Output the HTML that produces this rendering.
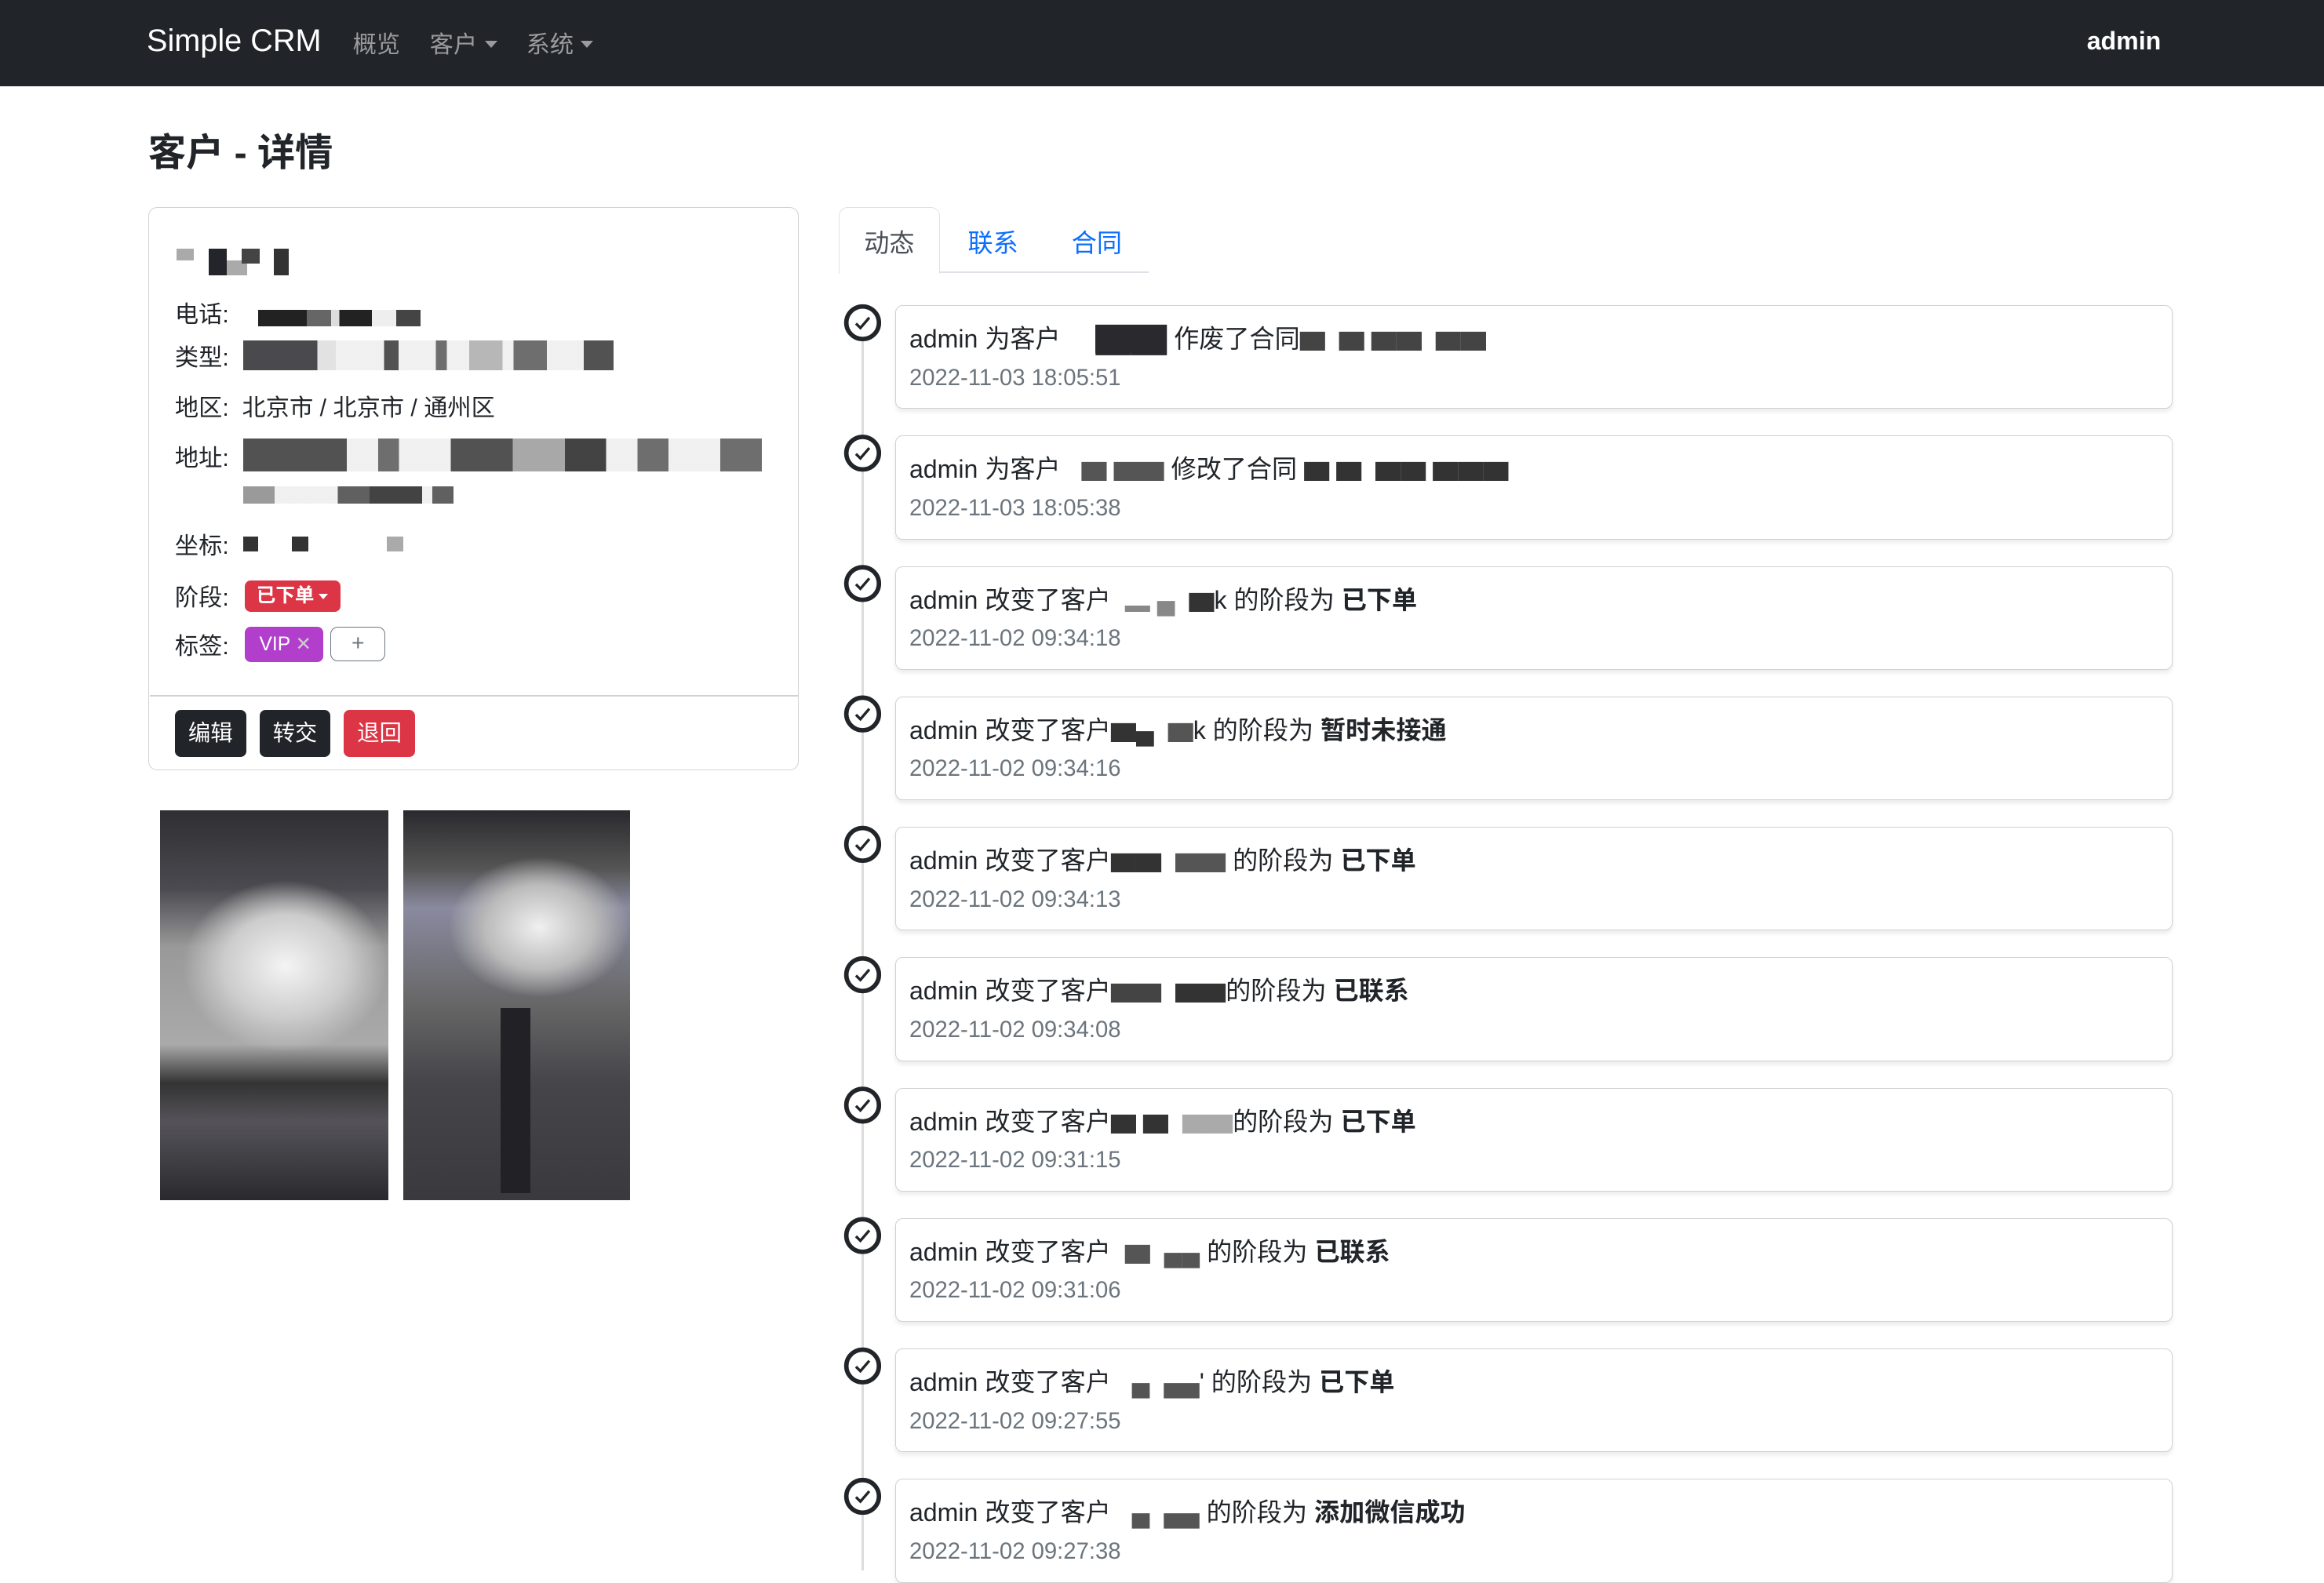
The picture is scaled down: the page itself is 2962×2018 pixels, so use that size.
<!DOCTYPE html>
<html><head><meta charset="utf-8"><style>
html,body{margin:0;padding:0;background:#fff;}
body{width:1568px;height:1059px;zoom:1.8890;overflow:hidden;position:relative;font-family:"Liberation Sans","Noto Sans CJK SC",sans-serif;color:#212529;}
.a{position:absolute;}
.nav{left:0;top:0;width:1568px;height:58px;background:#212529;}
.brand{left:99px;top:16px;font-size:21px;color:#fff;}
.nl{top:17px;font-size:16px;color:#9a9b9d;}
.caret{display:inline-block;border-left:4.5px solid transparent;border-right:4.5px solid transparent;border-top:5px solid #9a9b9d;vertical-align:3px;margin-left:5px;}
.card{left:100px;top:140px;width:438px;height:379px;border:1px solid #d0d2d4;border-radius:6px;}
.lbl{left:118px;font-size:16px;}
.px{position:absolute;}
.btn{top:479px;height:32px;line-height:32px;width:48px;text-align:center;color:#fff;font-size:15px;border-radius:4px;}
.item{left:604px;width:861px;height:69px;border:1px solid #cfd1d3;border-radius:5px;box-shadow:0 2px 3px rgba(0,0,0,.08);}
.item .t{position:absolute;left:9px;top:9px;font-size:17px;white-space:nowrap;}
.item .d{position:absolute;left:9px;top:40px;font-size:15.5px;color:#6c757d;}
</style></head><body>
<div class="a nav"></div>
<div class="a brand">Simple CRM</div>
<div class="a nl" style="left:238px">概览</div>
<div class="a nl" style="left:290px">客户<span class="caret"></span></div>
<div class="a nl" style="left:355px">系统<span class="caret"></span></div>
<div class="a" style="left:1408px;top:18px;font-size:17px;color:#fff;font-weight:bold">admin</div>
<div class="a" style="left:100px;top:82px;font-size:25.5px;font-weight:bold">客户 - 详情</div>

<div class="a card"></div>
<div class="px" style="left:119px;top:168px;width:12px;height:8px;background:#aaa"></div>
<div class="px" style="left:141px;top:168px;width:12px;height:18px;background:#24252a"></div>
<div class="px" style="left:153px;top:176px;width:14px;height:10px;background:#aaa"></div>
<div class="px" style="left:163px;top:168px;width:12px;height:10px;background:#444"></div>
<div class="px" style="left:185px;top:168px;width:10px;height:18px;background:#333"></div>
<div class="a lbl" style="top:199px">电话:</div>
<div class="px" style="left:174px;top:209px;width:110px;height:11px;background:linear-gradient(90deg,#222 0 30%,#666 30% 45%,#ddd 45% 50%,#222 50% 70%,#eee 70% 85%,#444 85%)"></div>
<div class="a lbl" style="top:228px">类型:</div>
<div class="px" style="left:164px;top:230px;width:250px;height:20px;background:linear-gradient(90deg,#2a2a2e 0 20%,#ddd 20% 25%,#eee 25% 38%,#333 38% 42%,#eee 42% 52%,#555 52% 55%,#eee 55% 61%,#aaa 61% 70%,#eee 70% 73%,#555 73% 82%,#eee 82% 92%,#333 92%);opacity:.85"></div>
<div class="a lbl" style="top:262px">地区: &nbsp;北京市 / 北京市 / 通州区</div>
<div class="a lbl" style="top:296px">地址:</div>
<div class="px" style="left:164px;top:296px;width:350px;height:22px;background:linear-gradient(90deg,#333 0 20%,#eee 20% 26%,#555 26% 30%,#eee 30% 40%,#333 40% 52%,#999 52% 62%,#222 62% 70%,#eee 70% 76%,#555 76% 82%,#eee 82% 92%,#555 92%);opacity:.85"></div>
<div class="px" style="left:164px;top:328px;width:142px;height:12px;background:linear-gradient(90deg,#888 0 15%,#eee 15% 45%,#444 45% 60%,#222 60% 85%,#eee 85% 90%,#444 90%);opacity:.85"></div>
<div class="a lbl" style="top:355px">坐标:</div>
<div class="px" style="left:164px;top:362px;width:10px;height:10px;background:#333"></div>
<div class="px" style="left:197px;top:362px;width:11px;height:10px;background:#333"></div>
<div class="px" style="left:261px;top:362px;width:11px;height:10px;background:#aaa"></div>
<div class="a lbl" style="top:390px">阶段:</div>
<div class="a" style="left:165px;top:392px;width:65px;height:21px;background:#dc3545;border-radius:4px;color:#fff;font-size:13px;line-height:21px;text-indent:8px;font-weight:bold">已下单<span class="caret" style="border-top-color:#fff;margin-left:3px;vertical-align:2px;border-width:4px 3.5px 0"></span></div>
<div class="a lbl" style="top:423px">标签:</div>
<div class="a" style="left:165px;top:423px;width:53px;height:24px;background:#b13fcb;border-radius:4px;color:#fff;font-size:13px;line-height:24px;text-indent:10px">VIP <span style="color:#ccc">✕</span></div>
<div class="a" style="left:223px;top:423px;width:36px;height:22px;border:1px solid #6c757d;border-radius:5px;color:#6c757d;text-align:center;line-height:22px;font-size:15px">+</div>
<div class="a" style="left:101px;top:469px;width:438px;height:1px;background:#d0d2d4"></div>
<div class="a btn" style="left:118px;background:#212529">编辑</div>
<div class="a btn" style="left:175px;background:#212529">转交</div>
<div class="a btn" style="left:232px;background:#dc3545">退回</div>

<div class="a" style="left:108px;top:547px;width:154px;height:263px;background:radial-gradient(ellipse 45% 22% at 55% 40%,#f4f4f4 0,#ccc 60%,transparent 100%),linear-gradient(#2e2e33 0,#4a4a50 20%,#999 35%,#aaa 60%,#333 70%,#55535a 80%,#2a2a2e 100%)"></div>
<div class="a" style="left:272px;top:547px;width:153px;height:263px;background:radial-gradient(ellipse 40% 18% at 60% 30%,#f0f0f0 0,#bbb 60%,transparent 100%),linear-gradient(#2a2a2e 0,#555 15%,#8a8aa0 25%,#666 50%,#45454a 70%,#3a3a3e 100%)"></div>
<div class="a" style="left:338px;top:680px;width:20px;height:125px;background:#222226"></div>

<div class="a" style="left:566px;top:140px;width:67px;height:44px;border:1px solid #dee2e6;border-bottom:none;border-radius:6px 6px 0 0;background:#fff"></div>
<div class="a" style="left:634px;top:183px;width:141px;height:1px;background:#dee2e6"></div>
<div class="a" style="left:583px;top:151px;font-size:17px;color:#495057">动态</div>
<div class="a" style="left:653px;top:151px;font-size:17px;color:#0d6efd">联系</div>
<div class="a" style="left:723px;top:151px;font-size:17px;color:#0d6efd">合同</div>

<div class="a" style="left:581px;top:220px;width:2px;height:840px;background:#dcdcdc"></div>

<div class="a item" style="top:206px"><div class="t">admin 为客户 &nbsp;&nbsp;&nbsp;&nbsp;<span style="background:#2a2a2e;color:#2a2a2e">████</span> 作废了合同<span style="color:#444">▆ &nbsp;▆ ▆▆ &nbsp;▆▆</span></div><div class="d">2022-11-03 18:05:51</div></div>
<div class="a item" style="top:294px"><div class="t">admin 为客户 &nbsp;&nbsp;<span style="color:#555">▆ ▆▆</span> 修改了合同 <span style="color:#333">▆ ▆ &nbsp;▆▆ ▆▆▆</span></div><div class="d">2022-11-03 18:05:38</div></div>
<div class="a item" style="top:382px"><div class="t">admin 改变了客户 &nbsp;<span style="color:#888">▂ ▄</span> &nbsp;<span style="color:#333">▆</span>k 的阶段为 <b>已下单</b></div><div class="d">2022-11-02 09:34:18</div></div>
<div class="a item" style="top:470px"><div class="t">admin 改变了客户<span style="color:#333">▆▄</span> &nbsp;<span style="color:#555">▆</span>k 的阶段为 <b>暂时未接通</b></div><div class="d">2022-11-02 09:34:16</div></div>
<div class="a item" style="top:558px"><div class="t">admin 改变了客户<span style="color:#333">▆▆</span> &nbsp;<span style="color:#555">▆▆</span> 的阶段为 <b>已下单</b></div><div class="d">2022-11-02 09:34:13</div></div>
<div class="a item" style="top:646px"><div class="t">admin 改变了客户<span style="color:#444">▆▆</span> &nbsp;<span style="color:#333">▆▆</span>的阶段为 <b>已联系</b></div><div class="d">2022-11-02 09:34:08</div></div>
<div class="a item" style="top:734px"><div class="t">admin 改变了客户<span style="color:#333">▆ ▆</span> &nbsp;<span style="color:#aaa">▆▆</span>的阶段为 <b>已下单</b></div><div class="d">2022-11-02 09:31:15</div></div>
<div class="a item" style="top:822px"><div class="t">admin 改变了客户 &nbsp;<span style="color:#555">▆</span> &nbsp;<span style="color:#555">▄▄</span> 的阶段为 <b>已联系</b></div><div class="d">2022-11-02 09:31:06</div></div>
<div class="a item" style="top:910px"><div class="t">admin 改变了客户 &nbsp;&nbsp;<span style="color:#555">▄ &nbsp;▄▄</span>' 的阶段为 <b>已下单</b></div><div class="d">2022-11-02 09:27:55</div></div>
<div class="a item" style="top:998px"><div class="t">admin 改变了客户 &nbsp;&nbsp;<span style="color:#555">▄ &nbsp;▄▄</span> 的阶段为 <b>添加微信成功</b></div><div class="d">2022-11-02 09:27:38</div></div>

<svg class="a" style="left:568px;top:204px;overflow:visible" width="28" height="840">
<defs><g id="c"><circle cx="14" cy="14" r="11" fill="#fff" stroke="#212529" stroke-width="3"/><path d="M9.5 14.5l3 3 6-7" fill="none" stroke="#212529" stroke-width="1.8"/></g></defs>
<use href="#c" y="0"/><use href="#c" y="88"/><use href="#c" y="176"/><use href="#c" y="264"/><use href="#c" y="352"/><use href="#c" y="440"/><use href="#c" y="528"/><use href="#c" y="616"/><use href="#c" y="704"/><use href="#c" y="792"/>
</svg>
</body></html>
